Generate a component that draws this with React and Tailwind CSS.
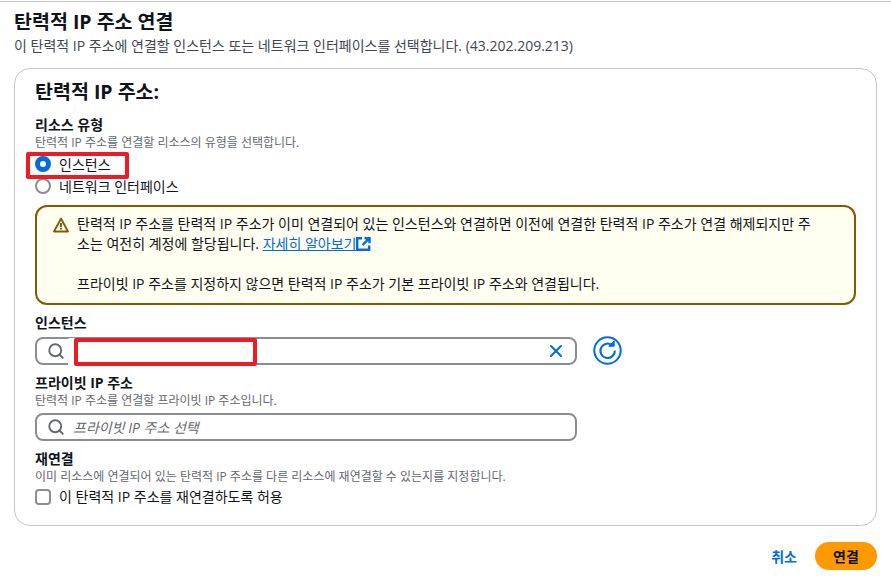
import React from "react";
import { Search, X } from "lucide-react";

const font = { fontFamily: '"Open Sans", "Noto Sans CJK KR", sans-serif' };

function Radio({ checked }) {
  if (checked) {
    return <span className="w-4 h-4 rounded-full border-[5px] border-[#006ce0] bg-white shrink-0" />;
  }
  return <span className="w-4 h-4 rounded-full border-2 border-[#8c8c94] bg-white shrink-0" />;
}

function Field({ label, hint, className = "" }) {
  return (
    <div className={className}>
      <div className="text-[14px] leading-[18px] font-bold text-[#0f141a]">{label}</div>
      {hint && <div className="text-[12px] leading-[15px] mt-px text-[#656871]">{hint}</div>}
    </div>
  );
}

function WarningIcon() {
  return (
    <svg width="16" height="16" viewBox="0 0 16 16" fill="none" className="shrink-0 mt-[3px]">
      <path d="M8 1.6 1.1 14.4h13.8L8 1.6Z" stroke="#855900" strokeWidth="2" strokeLinejoin="round" fill="#fffef0" />
      <path d="M8 6v4.2M8 11v1.6" stroke="#855900" strokeWidth="2" />
    </svg>
  );
}

function ExternalIcon() {
  return (
    <svg width="15" height="14" viewBox="0 0 15 14" fill="none" className="inline-block align-[-2px] text-[#006ce0]">
      <path d="M6 1.2H1.2v11.6h12V8.5" stroke="currentColor" strokeWidth="2.4" />
      <path d="M8.5 1.2h5v5M13.5 1.2 6.5 8" stroke="currentColor" strokeWidth="2.4" />
    </svg>
  );
}

function RefreshIcon() {
  return (
    <svg width="29" height="29" viewBox="0 0 29 29" fill="none" className="text-[#006ce0]">
      <circle cx="14.5" cy="14.5" r="13.2" stroke="currentColor" strokeWidth="2" />
      <path d="M19.8 9.8A7.2 7.2 0 1 0 21.8 14.5" stroke="currentColor" strokeWidth="2" />
      <path d="M15.8 10.2h5.4V5z" fill="currentColor" stroke="currentColor" strokeWidth="1" />
    </svg>
  );
}

export default function App() {
  return (
    <div style={font} className="w-[891px] h-[586px] bg-white overflow-hidden border-t border-[#c6c6cd] mt-px text-[#0f141a]">
      <div className="px-[14px] pt-[8px]">
        <h1 className="text-[19.5px] leading-[24px] font-bold">탄력적 IP 주소 연결</h1>
        <p className="text-[14px] leading-[18px] mt-[3px] text-[#424650]">
          이 탄력적 IP 주소에 연결할 인스턴스 또는 네트워크 인터페이스를 선택합니다. (43.202.209.213)
        </p>

        <div className="mt-[13px] h-[458px] border border-[#c6c6cd] rounded-2xl pl-[20px] pr-[20px] pt-[11px]">
          <h2 className="text-[19.5px] leading-[24px] font-bold">탄력적 IP 주소:</h2>

          <Field label="리소스 유형" hint="탄력적 IP 주소를 연결할 리소스의 유형을 선택합니다." className="mt-[12px]" />

          <div className="relative mt-[2px]">
            <div className="absolute left-[-9px] top-0 w-[103px] h-[27px] border-[4px] border-[#ed1c24] rounded-[2px]" />
            <label className="flex items-center gap-2 h-[24px] text-[14px]">
              <Radio checked />
              인스턴스
            </label>
            <label className="flex items-center gap-2 h-[20px] text-[14px]">
              <Radio />
              네트워크 인터페이스
            </label>
          </div>

          <div className="mt-[9px] h-[100px] border-2 border-[#855900] rounded-xl bg-[#fffef0] flex gap-[8px] pl-[16px] pr-[36px] pt-[7px]">
            <WarningIcon />
            <div className="text-[14px] leading-[20px] text-[#0f141a]">
              <p>
                탄력적 IP 주소를 탄력적 IP 주소가 이미 연결되어 있는 인스턴스와 연결하면 이전에 연결한 탄력적 IP 주소가 연결 해제되지만 주<br />
                소는 여전히 계정에 할당됩니다.{" "}
                <a className="text-[#006ce0] underline">자세히 알아보기</a>
                <ExternalIcon />
              </p>
              <p className="mt-[20px]">프라이빗 IP 주소를 지정하지 않으면 탄력적 IP 주소가 기본 프라이빗 IP 주소와 연결됩니다.</p>
            </div>
          </div>

          <Field label="인스턴스" className="mt-[9px]" />
          <div className="flex items-center gap-[16px] mt-[4px]">
            <div className="relative w-[542px] h-[28px] border-2 border-[#8c8c94] rounded-lg flex items-center justify-between pl-[10px] pr-[9px]">
              <Search size={18} strokeWidth={2.5} className="text-[#656871]" />
              <div className="absolute left-[37px] top-[-1px] w-[183px] h-[28px] border-[4px] border-[#ed1c24] rounded-[2px] bg-white shadow-[-6px_0_0_#fff]" />
              <X size={20} strokeWidth={2.4} className="text-[#006ce0]" />
            </div>
            <RefreshIcon />
          </div>

          <Field label="프라이빗 IP 주소" hint="탄력적 IP 주소를 연결할 프라이빗 IP 주소입니다." className="mt-[9px]" />
          <div className="w-[542px] h-[28px] mt-[5px] border-2 border-[#8c8c94] rounded-lg flex items-center gap-[8px] pl-[10px]">
            <Search size={18} strokeWidth={2.5} className="text-[#656871] shrink-0" />
            <span className="text-[14px] italic text-[#656871]">프라이빗 IP 주소 선택</span>
          </div>

          <Field label="재연결" hint="이미 리소스에 연결되어 있는 탄력적 IP 주소를 다른 리소스에 재연결할 수 있는지를 지정합니다." className="mt-[9px]" />
          <label className="flex items-center gap-2 mt-[3px] text-[14px] leading-[20px]">
            <span className="w-4 h-4 rounded-[4px] border-2 border-[#8c8c94] bg-white shrink-0" />
            이 탄력적 IP 주소를 재연결하도록 허용
          </label>
        </div>

        <div className="flex items-center justify-end gap-[18px] mt-[16px]">
          <button className="text-[14px] font-bold text-[#006ce0]">취소</button>
          <button className="w-[62px] h-[28px] rounded-full bg-[#ff9900] text-[14px] font-bold text-[#0f141a]">연결</button>
        </div>
      </div>
    </div>
  );
}
